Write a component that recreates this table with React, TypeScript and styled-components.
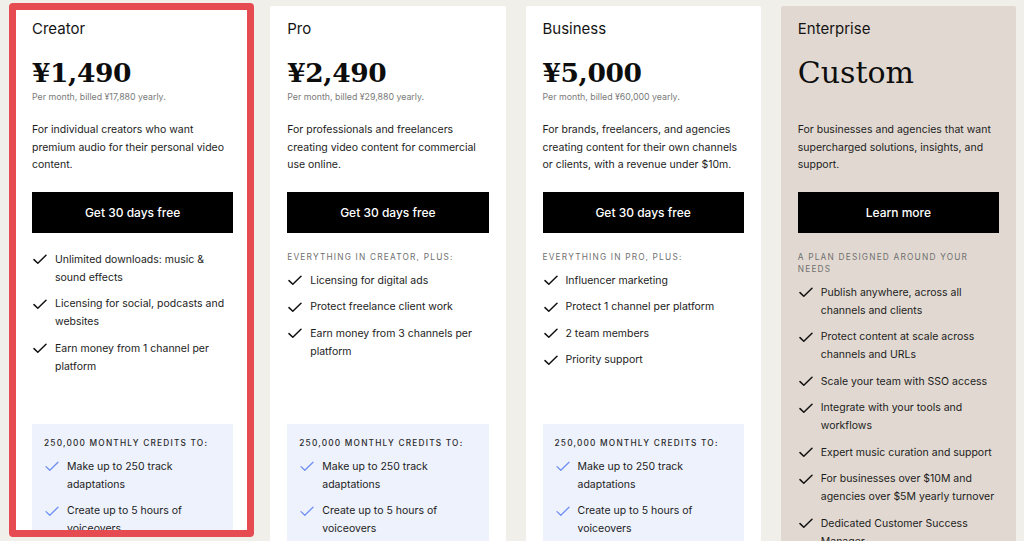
import React from "react";
import styled, { createGlobalStyle } from "styled-components";

const Global = createGlobalStyle`
  html, body { margin: 0; padding: 0; background: #f0efea; }
  body { font-family: Inter, "Noto Sans", Arial, sans-serif; color: #141414; -webkit-font-smoothing: antialiased; }
  * { box-sizing: border-box; }
`;

const Page = styled.div`
  width: 1024px;
  height: 541px;
  overflow: hidden;
  padding: 6px 8px 0 15px;
  display: grid;
  grid-template-columns: repeat(4, 1fr);
  gap: 20px;
  align-items: start;
`;

const Card = styled.div<{ $tone?: "white" | "sand"; $highlight?: boolean }>`
  position: relative;
  background: ${(p) => (p.$tone === "sand" ? "#e1d9d1" : "#ffffff")};
  padding: 13px 17px 0 17px;
  display: flex;
  flex-direction: column;
  height: ${(p) => (p.$highlight ? "528px" : "auto")};
  overflow: ${(p) => (p.$highlight ? "hidden" : "visible")};
  border-radius: 2px;
  & > * { flex-shrink: 0; }
`;

const Frame = styled.div`
  position: absolute;
  top: -3px;
  left: -6px;
  right: -4px;
  bottom: -3px;
  border: 7px solid #e54b50;
  border-radius: 4px;
  pointer-events: none;
  z-index: 2;
`;

const Wrap = styled.div`
  position: relative;
  height: 528px;
`;

const Title = styled.div`
  font-size: 15px;
  line-height: 20px;
  font-weight: 400;
  color: #141414;
`;

const Price = styled.div<{ $custom?: boolean }>`
  margin-top: 18px;
  font-family: "DejaVu Serif", "Liberation Serif", serif;
  font-size: ${(p) => (p.$custom ? "30px" : "26.5px")};
  font-weight: ${(p) => (p.$custom ? 400 : 700)};
  line-height: 32px;
  letter-spacing: ${(p) => (p.$custom ? "0" : "-0.4px")};
  color: #0d0d0d;
`;

const Billing = styled.div`
  margin-top: 2px;
  font-size: 8.8px;
  line-height: 12px;
  color: #7a7a7a;
  min-height: 12px;
`;

const Description = styled.p`
  margin: 18px 0 0 0;
  font-size: 10.5px;
  line-height: 17.5px;
  color: #1c1c1c;
  min-height: 52.5px;
`;

const CtaButton = styled.button`
  margin-top: 18px;
  height: 41px;
  width: 100%;
  background: #000;
  color: #fff;
  border: none;
  font-family: Inter, sans-serif;
  font-size: 12px;
  font-weight: 500;
  cursor: pointer;
`;

const Features = styled.div`
  padding-top: 18px;
  min-height: 191px;
  display: flex;
  flex-direction: column;
  gap: 9px;
`;

const Eyebrow = styled.div<{ $dark?: boolean }>`
  font-size: 8.3px;
  line-height: 12px;
  letter-spacing: 1.2px;
  text-transform: uppercase;
  color: ${(p) => (p.$dark ? "#2b2b2b" : "#707070")};
  font-weight: ${(p) => (p.$dark ? 500 : 400)};
`;

const List = styled.ul`
  list-style: none;
  margin: 0;
  padding: 0;
  display: flex;
  flex-direction: column;
  gap: 8.5px;
`;

const Item = styled.li`
  display: flex;
  align-items: flex-start;
  gap: 8px;
  padding-left: 1px;
  font-size: 10.5px;
  line-height: 18px;
  color: #1c1c1c;
`;

const IconBox = styled.span`
  flex: none;
  width: 14px;
  height: 18px;
  display: flex;
  align-items: center;
  justify-content: center;
`;

const Credits = styled.div`
  background: #eef2fd;
  padding: 13px 12px 14px 12px;
  display: flex;
  flex-direction: column;
  gap: 9px;
  min-height: 140px;
`;

const Check = ({ color = "#111", width = 1.5 }: { color?: string; width?: number }) => (
  <svg width="14" height="11" viewBox="0 0 14 11" fill="none">
    <path d="M1 5.6 L4.8 9.3 L13 1.2" stroke={color} strokeWidth={width} strokeLinecap="round" strokeLinejoin="round" />
  </svg>
);

type Plan = {
  name: string;
  price: string;
  billing?: string;
  desc: string;
  cta: string;
  eyebrow?: string;
  features: string[];
  credits: boolean;
  sand?: boolean;
  highlight?: boolean;
};

const plans: Plan[] = [
  {
    name: "Creator",
    price: "¥1,490",
    billing: "Per month, billed ¥17,880 yearly.",
    desc: "For individual creators who want premium audio for their personal video content.",
    cta: "Get 30 days free",
    features: [
      "Unlimited downloads: music & sound effects",
      "Licensing for social, podcasts and websites",
      "Earn money from 1 channel per platform",
    ],
    credits: true,
    highlight: true,
  },
  {
    name: "Pro",
    price: "¥2,490",
    billing: "Per month, billed ¥29,880 yearly.",
    desc: "For professionals and freelancers creating video content for commercial use online.",
    cta: "Get 30 days free",
    eyebrow: "Everything in Creator, plus:",
    features: [
      "Licensing for digital ads",
      "Protect freelance client work",
      "Earn money from 3 channels per platform",
    ],
    credits: true,
  },
  {
    name: "Business",
    price: "¥5,000",
    billing: "Per month, billed ¥60,000 yearly.",
    desc: "For brands, freelancers, and agencies creating content for their own channels or clients, with a revenue under $10m.",
    cta: "Get 30 days free",
    eyebrow: "Everything in Pro, plus:",
    features: [
      "Influencer marketing",
      "Protect 1 channel per platform",
      "2 team members",
      "Priority support",
    ],
    credits: true,
  },
  {
    name: "Enterprise",
    price: "Custom",
    desc: "For businesses and agencies that want supercharged solutions, insights, and support.",
    cta: "Learn more",
    eyebrow: "A plan designed around your needs",
    features: [
      "Publish anywhere, across all channels and clients",
      "Protect content at scale across channels and URLs",
      "Scale your team with SSO access",
      "Integrate with your tools and workflows",
      "Expert music curation and support",
      "For businesses over $10M and agencies over $5M yearly turnover",
      "Dedicated Customer Success Manager",
    ],
    credits: false,
    sand: true,
  },
];

const creditItems = ["Make up to 250 track adaptations", "Create up to 5 hours of voiceovers"];

const PlanCard = ({ plan }: { plan: Plan }) => {
  const card = (
    <Card $tone={plan.sand ? "sand" : "white"} $highlight={plan.highlight}>
      <Title>{plan.name}</Title>
      <Price $custom={!plan.billing}>{plan.price}</Price>
      <Billing>{plan.billing ?? "\u00a0"}</Billing>
      <Description>{plan.desc}</Description>
      <CtaButton>{plan.cta}</CtaButton>
      <Features>
        {plan.eyebrow && <Eyebrow>{plan.eyebrow}</Eyebrow>}
        <List>
          {plan.features.map((f) => (
            <Item key={f}>
              <IconBox>
                <Check />
              </IconBox>
              <span>{f}</span>
            </Item>
          ))}
        </List>
      </Features>
      {plan.credits && (
        <Credits>
          <Eyebrow $dark>250,000 monthly credits to:</Eyebrow>
          <List>
            {creditItems.map((c) => (
              <Item key={c}>
                <IconBox>
                  <Check color="#6f8ff3" width={1.3} />
                </IconBox>
                <span>{c}</span>
              </Item>
            ))}
          </List>
        </Credits>
      )}
    </Card>
  );
  if (plan.highlight) {
    return (
      <Wrap>
        {card}
        <Frame />
      </Wrap>
    );
  }
  return card;
};

export default function App() {
  return (
    <>
      <Global />
      <Page>
        {plans.map((p) => (
          <PlanCard key={p.name} plan={p} />
        ))}
      </Page>
    </>
  );
}
